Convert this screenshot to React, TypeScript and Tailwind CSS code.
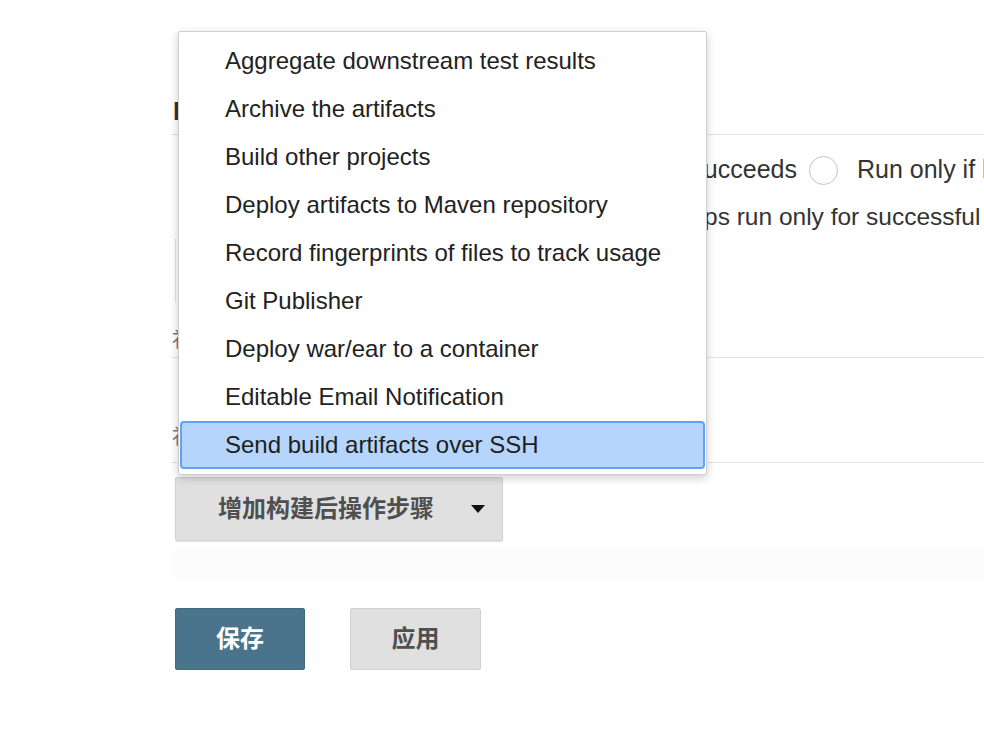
const menuItems = [
  'Aggregate downstream test results',
  'Archive the artifacts',
  'Build other projects',
  'Deploy artifacts to Maven repository',
  'Record fingerprints of files to track usage',
  'Git Publisher',
  'Deploy war/ear to a container',
  'Editable Email Notification',
  'Send build artifacts over SSH',
];

const sans = "font-['Liberation_Sans','Noto_Sans_CJK_SC',sans-serif]";

export default function App() {
  const selected = menuItems.length - 1;

  return (
    <div className={`relative w-[984px] h-[748px] overflow-hidden bg-white text-[#333] ${sans}`}>
      {/* page under the menu */}
      <div className="flex flex-col pl-[172px]">
        <div className="h-[134px] flex items-end pb-[10px]">
          <span className="ml-[1px] text-[26px] font-bold leading-[26px] text-[#333] whitespace-nowrap">
            Post-build Actions
          </span>
        </div>

        <section className="h-[223px] border-t border-[#e2e2e2] flex flex-col">
          <div className="h-[70px] flex items-center whitespace-nowrap text-[25px]">
            <span className="flex-none w-[625px] text-right overflow-hidden">
              Run only if build succeeds
            </span>
            <span className="flex-none ml-[12px] w-[29px] h-[29px] rounded-full border-[1.5px] border-[#c4c4c4] bg-white" />
            <span className="flex-none ml-[19px]">Run only if build succeeds or is unstable</span>
          </div>
          <div className="h-[24px] flex items-center whitespace-nowrap text-[24.5px]">
            <span className="flex-none w-[532px] text-right overflow-hidden">
              Should the post-build ste
            </span>
            <span className="flex-none">ps run only for successful builds, etc.</span>
          </div>
          <div className="mt-[10px] ml-[3px] h-[64px] w-[600px] border-l border-[#e4e4e4]" />
          <div className="mt-[22px] text-[20px] text-[#777] whitespace-nowrap">补充说明</div>
        </section>

        <section className="h-[106px] border-y border-[#e2e2e2] flex items-end pb-[10px]">
          <span className="text-[20px] text-[#777] whitespace-nowrap">补充说明</span>
        </section>

        <div className="mt-[14px] ml-[3px]">
          <button className="w-[328px] h-[64px] flex items-center pl-[42px] bg-[#e0e0e0] border border-[#d2d2d2] rounded-[2px] shadow-[0_1px_1px_rgba(0,0,0,0.12)]">
            <span className="text-[24px] font-bold text-[#4f4f4f]">增加构建后操作步骤</span>
            <svg className="ml-[37px]" width="14" height="8" viewBox="0 0 14 8">
              <path d="M0 0 L14 0 L7 8 Z" fill="#111" />
            </svg>
          </button>
        </div>

        <div className="mt-[7px] h-[32px] bg-[#fdfcfc]" />

        <div className="mt-[28px] ml-[3px] flex gap-[45px]">
          <button className="w-[130px] h-[62px] bg-[#4a748b] border border-[#41687d] rounded-[2px] text-white text-[24px] font-bold">
            保存
          </button>
          <button className="w-[131px] h-[62px] bg-[#e0e0e0] border border-[#d0d0d0] rounded-[2px] text-[#4f4f4f] text-[24px] font-bold">
            应用
          </button>
        </div>
      </div>

      {/* open dropdown menu */}
      <ul className="absolute left-[178px] top-[31px] w-[529px] h-[444px] bg-white border border-[#cfcfcf] rounded-[2px] shadow-[0_3px_10px_rgba(0,0,0,0.2)] py-[5px] px-[1px]">
        {menuItems.map((item, i) => (
          <li
            key={item}
            className={
              i === selected
                ? 'h-[48px] flex items-center pl-[43px] text-[24px] text-[#1e1e1e] whitespace-nowrap bg-[#b5d5fd] border-2 border-[#5fa3f6] rounded-[4px]'
                : 'h-[48px] flex items-center pl-[45px] text-[24px] text-[#222] whitespace-nowrap'
            }
          >
            {item}
          </li>
        ))}
      </ul>
    </div>
  );
}
